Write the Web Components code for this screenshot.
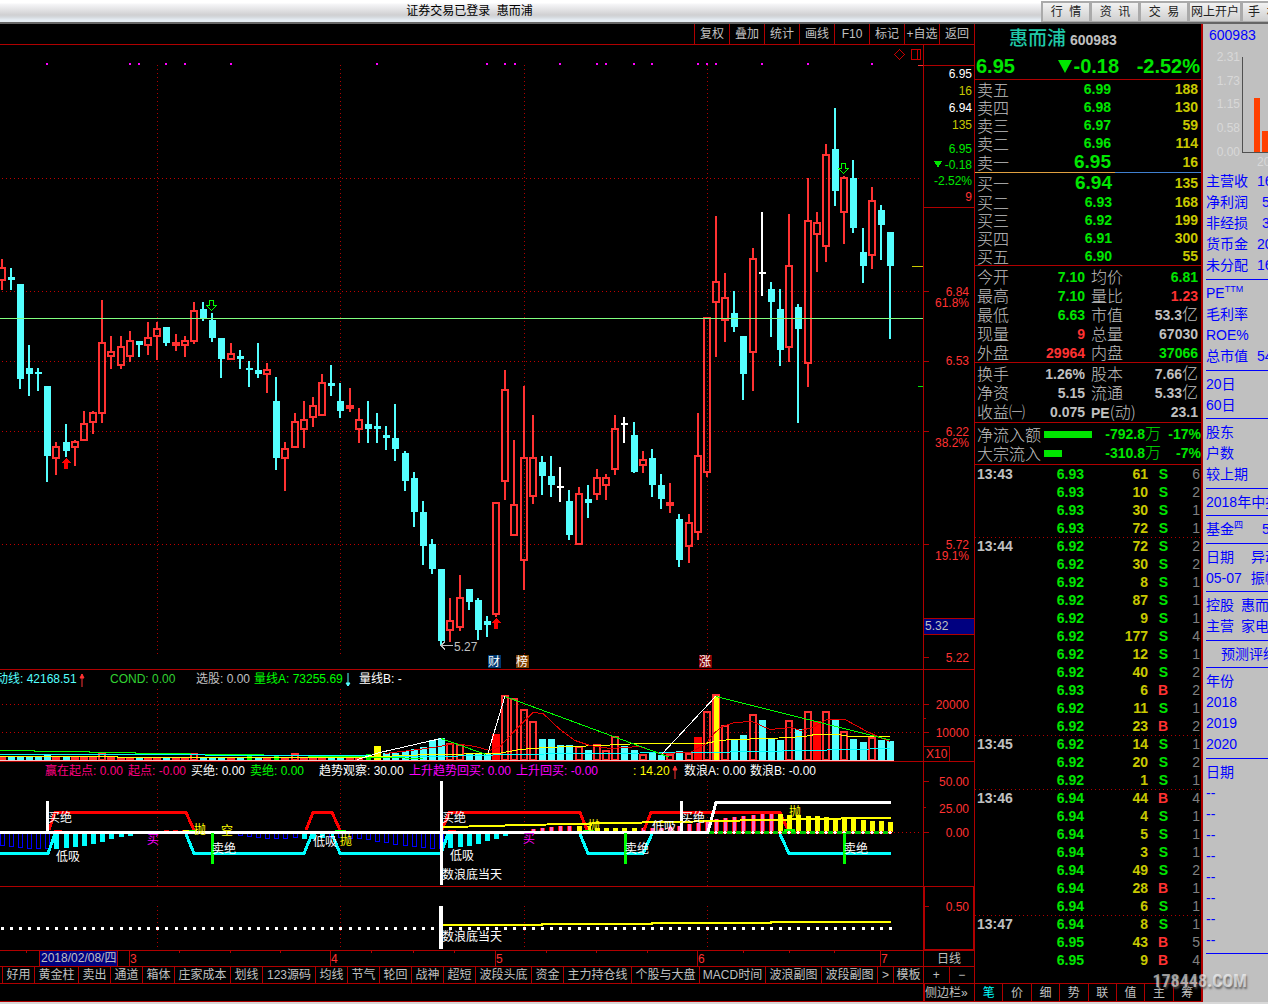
<!DOCTYPE html>
<html lang="zh-CN">
<head>
<meta charset="utf-8">
<title>惠而浦 600983</title>
<style>
html{background:#d8d8d8}
body{margin:0;font:12px/16px "Liberation Sans","Noto Sans CJK SC",sans-serif;color:#c0c0c0;overflow:hidden;
--line:#b00000;--up:#ff3232;--down:#00e600;--vol:#c8c800}
</style>
</head>
<body>
<trade-app></trade-app>
<script>
const BASE = `*{box-sizing:border-box}
button{font:inherit;color:inherit;background:none;border:0;margin:0;padding:0;white-space:pre;cursor:pointer}
svg{display:block}table{border-collapse:collapse;border-spacing:0}td,th{padding:0;font-weight:inherit;text-align:left}`;
class Base extends HTMLElement {
  connectedCallback() {
    if (this.shadowRoot) return;
    this.attachShadow({mode: 'open'}).innerHTML = `<style>${BASE}${this.css()}</style>${this.html()}`;
  }
  css() { return ''; }
  html() { return '<slot></slot>'; }
}

/* ---------- SVG helpers ---------- */
const CX = k => Math.round(1.5 + 9.16 * k);
const rect = (x, y, w, h, f) => `<rect x="${x}" y="${y}" width="${w}" height="${h}" fill="${f}"/>`;
const hollow = (x, y, w, h, c, s = 2) => `<rect x="${x + s / 2}" y="${y + s / 2}" width="${w - s}" height="${Math.max(h - s, 0)}" fill="none" stroke="${c}" stroke-width="${s}"/>`;
const poly = (pts, c, s = 1) => `<polyline points="${pts}" fill="none" stroke="${c}" stroke-width="${s}"/>`;
/* y is the middle of the glyphs; Chinese glyphs reach lower than digits */
const text = (x, y, t, c, a = 'start') => `<text x="${x}" y="${y + (/^[\u4e00-\u9fff]/.test(t) ? 5 : 4)}" fill="${c}" text-anchor="${a}">${t}</text>`;
const hdots = y => `<path d="M2 ${y}.5H920" stroke="#c00000" stroke-dasharray="1 3"/>`;
const vdots = (a, b) => [157, 340, 524, 707].map(x => `<path d="M${x}.5 ${a}V${b}" stroke="#b00000" stroke-dasharray="1 3"/>`).join('');
const svg = (x, y, w, h, body) => `<svg viewBox="${x} ${y} ${w} ${h}" height="${h}" preserveAspectRatio="xMinYMin meet" shape-rendering="crispEdges">${body}</svg>`;
const ROW_CSS = `:host{display:flex;background:#000;border-bottom:1px solid var(--line)}
.plot{flex:1 1 0;min-width:0;overflow:hidden}.plot svg{width:100%}.axis{flex:0 0 52px;border:solid var(--line);border-width:0 1px}.axis svg{width:50px}
text{font:12px "Liberation Sans","Noto Sans CJK SC",sans-serif}
.legend{display:grid;height:17px;padding-top:2px;line-height:15px;white-space:nowrap;overflow:hidden}.legend span{display:flex;align-items:center}.plot .legend svg{width:8px;flex:none;margin-left:1px}`;
const UP = '<svg width="8" height="14" viewBox="0 0 8 14"><path d="M4 14V1M2 5L4 1L6 5Z" stroke="#ff3232" fill="#ff3232"/></svg>';
const DN = '<svg width="8" height="14" viewBox="0 0 8 14"><path d="M4 0V13M2 10L4 13L6 10Z" stroke="#54ffff" fill="#54ffff"/></svg>';

/* type, high, low, body top, body bottom */
const K = `r259 290 267 281,c268 290 277 280,c284 389 284 379,c345 396 368 374,c368 391 372 374,c386 482 386 456,r442 475 446 459,c424 457 442 451,r440 466 441 448,r411 441 423 441,r411 434 412 423,r300 423 342 414,r336 369 351 357,r336 369 346 366,r331 362 340 357,c341 357 341 345,r322 355 337 346,r322 360 328 337,c327 346 327 343,r334 351 342 346,r336 357 340 346,r302 344 310 342,c302 321 309 318,c313 342 320 338,c338 378 338 359,r343 360 353 360,c350 369 356 359,c361 387 368 370,c343 378 370 374,r363 393 369 375,c377 470 401 458,r442 491 448 459,r413 448 421 448,r401 448 419 430,r397 427 405 418,r374 416 382 416,c365 396 383 386,c383 418 401 411,r388 412 405 409,r408 443 419 430,c401 443 424 429,c413 443 426 429,c426 450 435 438,c404 461 438 449,c451 491 453 481,c472 527 478 512,c501 565 512 546,c539 574 544 569,c569 646 569 641,r598 642 620 631,r575 631 597 628,c589 610 589 602,c598 640 600 630,c616 637 621 625,r502 617 502 615,r370 500 389 482,r440 536 504 536,r386 590 457 561,r415 504 457 497,c456 495 462 476,c456 497 476 485,w467 502 486 488,c490 540 501 535,r487 545 493 545,c485 518 499 503,r469 500 477 495,r474 500 477 486,r415 475 428 470,w417 443 423 425,c422 473 435 472,r451 473 459 466,c449 497 458 485,c474 509 485 499,r483 513 502 506,c514 567 519 560,r514 563 522 547,r413 540 455 533,r317 477 317 473,r216 357 281 303,r273 342 297 321,c291 332 313 327,c336 400 336 374,r248 391 258 353,w212 296 272 274,c282 337 289 302,c289 366 309 350,r214 362 265 348,c304 423 307 329,r178 387 220 364,r212 272 222 235,r144 262 154 247,c108 206 149 191,r176 244 177 213,c160 233 178 228,c228 283 252 266,r187 269 200 256,c205 260 210 225,c232 339 232 266`
  .split(',').map(s => [s[0], ...s.slice(1).split(' ').map(Number)]);

customElements.define('price-chart', class extends Base {
  css() { return ROW_CSS; }
  html() {
    let b = [178, 291, 361, 431, 544].map(hdots).join('') + vdots(65, 655);
    for (const x of [46, 129, 138, 165, 184, 230, 376, 486, 504, 514, 559, 596, 605, 633, 651, 697, 706, 715, 761, 807, 871]) b += rect(x, 63, 2, 2, '#ff00ff');
    K.forEach(([t, hi, lo, top, bot], k) => {
      const x = CX(k);
      if (t === 'r') b += rect(x - 1, hi, 2, top - hi, '#ff3232') + rect(x - 1, bot, 2, lo - bot, '#ff3232') + hollow(x - 4, top, 8, bot - top, '#ff3232');
      else b += rect(x - 1, hi, 2, lo - hi, t === 'c' ? '#54ffff' : '#fff') + rect(x - 3, top, 7, bot - top, t === 'c' ? '#54ffff' : '#fff');
    });
    b += rect(0, 318, 923, 1, '#80ff80') + rect(912, 266, 11, 1, '#c8c800') + rect(918, 386, 5, 1, '#00e600') + rect(918, 65, 5, 1, '#ff3232');
    const down = (x, y) => `<path d="M${x - 1.5} ${y + .5}h4v5h3l-5 5l-5 -5h3z" fill="none" stroke="#00ff00"/>`;
    const up = (x, y) => `<path d="M${x} ${y}l5 5h-3v6h-4v-6h-3z" fill="#ff0000"/>`;
    b += down(211, 300) + down(843, 163) + up(66, 458) + up(496, 618);
    b += '<path d="M899.500 49.500l5 5l-5 5l-5 -5zM911.500 49.500h9v10h-9zM917.500 49v11" fill="none" stroke="#c80000"/>';
    b += '<path d="M441 645.500h12M445 641.500l-4 4l4 4" fill="none" stroke="#c0c0c0"/>' + text(454, 647, '5.27', '#c0c0c0');
    for (const [x, t, c] of [[488, '财', '#003870'], [516, '榜', '#804000'], [699, '涨', '#800000']]) b += rect(x, 655, 13, 13, c) + text(x, 661, t, '#fff');
    let a = [65, 207].map(y => rect(924, y, 50, 1, '#b00000')).join('') + [291, 361, 431, 544, 657].map(y => rect(924, y, 5, 1, '#b00000')).join('');
    for (const [y, t, c] of [[74, '6.95', '#fff'], [91, '16', '#c8c800'], [108, '6.94', '#fff'], [125, '135', '#c8c800'], [149, '6.95', '#00e600'], [165, '-0.18', '#00e600'], [181, '-2.52%', '#00e600'], [197, '9', '#ff3232']]) a += text(972, y, t, c, 'end');
    a += '<path d="M934 161h8l-4 7z" fill="#00e600"/>';
    for (const [y, t] of [[292, '6.84'], [303, '61.8%'], [361, '6.53'], [432, '6.22'], [443, '38.2%'], [545, '5.72'], [556, '19.1%'], [658, '5.22']]) a += text(969, y, t, '#ff3232', 'end');
    a += rect(924, 618, 50, 17, '#b00000') + rect(924, 619, 50, 15, '#000080') + text(925, 626, '5.32', '#c0c0c0');
    return `<div class="plot">${svg(0, 45, 923, 624, b)}</div><div class="axis">${svg(924, 45, 50, 624, a)}</div>`;
  }
});

customElements.define('volume-chart', class extends Base {
  css() { return ROW_CSS + `.legend{grid-template-columns:110px 86px 58px 105px auto}.first{margin-left:-4px}`; }
  html() {
    let b = hdots(704) + hdots(732) + vdots(689, 758);
    const small = {5: 755, 11: 753, 21: 753, 27: 756, 30: 756, 32: 753, 40: 754, 41: 746, 42: 753, 43: 753, 44: 751, 45: 749, 46: 747, 47: 740, 48: 738, 49: 743, 50: 744, 51: 754, 52: 754, 53: 754};
    const tops = [734, 695, 698, 709, 721, 739, 739, 745, 745, 746, 750, 744, 750, 736, 746, 750, 754, 752, 755, 754, 751, 753, 737, 711, 694, 725, 739, 735, 714, 720, 738, 740, 720, 729, 711, 721, 711, 720, 731, 739, 742, 737, 740, 741];
    K.forEach(([t], k) => {
      const x = CX(k), y = k < 54 ? small[k] || 757 : tops[k - 54], h = 760 - y;
      if ([54, 76, 89].includes(k)) b += rect(x - 4, y, 8, h, '#ff0000');
      else if (k === 78) b += hollow(x - 4, y, 8, h, '#ff3232') + rect(x - 2, y + 2, 5, h - 2, '#ffff00');
      else if (k === 41) b += rect(x - 3, y, 7, h, '#ffff00');
      else if ([27, 30, 40].includes(k)) b += rect(x - 2, y, 5, h, '#00ff00');
      else if (t === 'r') b += hollow(x - 4, y, 8, h + 1, '#ff3232');
      else b += rect(x - 3, y, 7, h, '#54ffff');
    });
    b += rect(0, 760, 894, 1, '#ffc8c8');
    b += poly('0,750.5 34,750.5 34,751.5 89,751.5 89,752.5 135,752.5 135,753.5 190,753.5 190,754.5 263,754.5 263,755.5 350,756.5 423,758.5', '#00ff00');
    b += poly('0,754.500 110,754.500 300,755.500 441,756.500 510,754.500 580,753.500 700,752.500 760,751.500 850,749.500 890,748.500', '#00ffff');
    b += poly('0,756.500 117,756.500 117,757.500 355,757.500 430,754.500 498,753.500 520,749.500 545,747.500 600,745.500 640,743.500 705,743.500 715,741.500 730,739.500 770,738.500 805,736.500 815,734.500 838,734.500 850,736.500 890,736.500', '#ffff00');
    b += poly('385,753.500 418,749.500 440,746.500 455,743.500 475,746.500 490,750.500 500,746.500 515,730.500 533,712.500 543,713.500 560,729.500 575,740.500 590,745.500 610,748.500 640,746.500 660,753.500 690,752.500 705,744.500 715,732.500 722,726.500 735,722.500 752,721.500 770,729.500 792,727.500 800,730.500 813,727.500 827,719.500 845,719.500 867,731.500 880,737.500 890,741.500', '#e00000');
    b += poly('357,759.500 380,752.500 441,738.500', '#fff') + poly('441,738.500 486,754.500', '#00ff00') + poly('488,753 505,696', '#fff') + poly('505,696.500 669,757', '#00ff00') + poly('662,754 716,696', '#fff') + poly('716,696.500 890,740', '#00ff00');
    let a = rect(924, 704, 5, 1, '#b00000') + rect(924, 718, 2, 1, '#b00000') + rect(924, 732, 5, 1, '#b00000');
    a += text(969, 705, '20000', '#ff3232', 'end') + text(969, 733, '10000', '#ff3232', 'end') + '<path d="M924 746.500h25.500v15" fill="none" stroke="#b00000"/>' + text(926, 754, 'X10', '#ff3232');
    return `<div class="plot"><div class="legend"><span class="first" style="color:#54ffff">动线: 42168.51${UP}</span><span style="color:#32d232">COND: 0.00</span><span>选股: 0.00</span><span style="color:#00ff00">量线A: 73255.69${DN}</span><span style="color:#fff">量线B: -</span></div>${svg(0, 687, 923, 74, b)}</div><div class="axis">${svg(924, 670, 50, 91, a)}</div>`;
  }
});

customElements.define('signal-chart', class extends Base {
  css() { return ROW_CSS + `.legend{padding-left:45px;grid-template-columns:83px 63px 59px 69px 90px 107px 117px 51px 66px auto}`; }
  html() {
    let b = vdots(781, 886) + hdots(832);
    const col = (k, y, f, w = 5) => rect(CX(k) - 2, y, w, 832 - y, f);
    const blue = {0: 846, 1: 847, 2: 848, 3: 849, 4: 849, 5: 849, 26: 836, 27: 837, 28: 838, 29: 839, 30: 839, 31: 839, 32: 838, 36: 838, 37: 838, 38: 839, 39: 839, 40: 840, 41: 842, 42: 843, 43: 845, 44: 846, 45: 847, 46: 848, 47: 849, 48: 849};
    for (const k in blue) b += hollow(CX(+k) - 2, 833, 5, blue[k] - 833, '#0000ff', 1);
    const cy = {6: 849, 7: 848, 8: 847, 9: 846, 10: 844, 11: 842, 12: 839, 13: 837, 14: 836, 33: 839, 34: 839, 35: 838, 49: 848, 50: 847, 51: 846, 52: 844, 53: 841, 54: 839, 55: 836};
    for (const k in cy) b += rect(CX(+k) - 2, 833, 5, cy[k] - 833, '#00ffff');
    [829, 828, 827, 826, 826].forEach((y, i) => b += col(58 + i, y, '#ff0000') + rect(CX(58 + i) - 1, y, 3, 832 - y, '#ff64c8'));
    [826, 826, 828, 828, 828, 828, 828].forEach((y, i) => b += col(63 + i, y, '#ffff00'));
    [828, 828, 828, 827, 826, 824, 823, 822, 819, 818, 817, 816, 815, 814, 814].forEach((y, i) => b += col(70 + i, y, '#ff0000') + rect(CX(70 + i) - 1, y, 3, 832 - y, '#ff64c8'));
    b += poly('0,853.500 48,853.500 55,834', '#00ffff', 3) + poly('186,834 194,853.500 304,853.500 312,834', '#00ffff', 3) + poly('332,834 340,853.500 441,853.500 448,834', '#00ffff', 3) + poly('580,834 588,853.500 643,853.500 652,834', '#00ffff', 3) + poly('780,834 789,853.500 891,853.500', '#00ffff', 3);
    b += poly('49,830 55,812.500 186,812.500 194,830', '#ff0000', 3) + poly('306,830 313,812.500 332,812.500 340,830', '#ff0000', 3) + poly('442,830 449,812.500 580,812.500 587,830', '#ff0000', 3) + poly('644,830 651,812.500 780,812.500 788,830', '#ff0000', 3);
    [814, 815, 815, 816, 816, 817, 818, 819, 819, 820, 821, 821, 822].forEach((y, i) => b += rect(CX(85 + i) - 2, y, 5, 832 - y, '#ffff00'));
    b += '<path d="M164 830.500h24" stroke="#ff0000" stroke-dasharray="5 4"/>' + rect(183, 830, 6, 1, '#ffff00') + rect(189, 830, 8, 1, '#00ff00') + rect(335, 830, 11, 1, '#00ff00') + rect(583, 830, 11, 1, '#00ff00') + rect(54, 830, 8, 1, '#ff0000') + rect(448, 830, 8, 1, '#ff0000');
    b += rect(708, 831, 183, 3, '#00c800') + rect(784, 829, 11, 3, '#00ff00');
    for (let k = 78; k < 98; k++) b += rect(CX(k) - 2, 831, 4, 3, '#ff0000') + rect(CX(k) - 1, 831, 2, 3, '#fff') + rect(CX(k) - 2, 832, 4, 1, '#fff');
    b += rect(0, 831, 709, 3, '#fff') + rect(46, 801, 3, 32, '#fff') + rect(680, 801, 3, 32, '#fff') + rect(440, 781, 3, 104, '#fff') + poly('708,832 716,802.500 891,802.500', '#fff', 3);
    b += poly('443,827 469,826.500 524,825 570,824 615,823 670,822 718,821 763,820 820,819 863,818 891,818', '#ffff00', 2);
    for (const x of [211, 624, 843]) b += rect(x, 833, 3, 31, '#00ff00');
    for (const [x, y, t, c] of [[48, 817, '买绝', '#fff'], [56, 856, '低吸', '#fff'], [147, 839, '买', '#ff00ff'], [194, 829, '抛', '#ffff00'], [221, 830, '空', '#ffff00'], [212, 848, '卖绝', '#fff'], [313, 841, '低吸', '#fff'], [340, 840, '抛', '#ffff00'], [442, 817, '买绝', '#fff'], [450, 855, '低吸', '#fff'], [442, 874, '数浪底当天', '#fff'], [523, 838, '买', '#ff00ff'], [588, 825, '抛', '#ffff00'], [652, 826, '低吸', '#fff'], [681, 817, '买绝', '#fff'], [625, 848, '卖绝', '#fff'], [789, 811, '抛', '#ffff00'], [844, 848, '卖绝', '#fff']]) b += text(x, y, t, c);
    let a = '';
    for (const [y, w] of [[781, 5], [807, 2], [832, 5]]) a += rect(924, y, w, 1, '#b00000');
    a += text(969, 782, '50.00', '#ff3232', 'end') + text(969, 809, '25.00', '#ff3232', 'end') + text(969, 833, '0.00', '#ff3232', 'end');
    const L = [['#ff0080', '赢在起点: 0.00'], ['#ff0080', '起点: -0.00'], ['#fff', '买绝: 0.00'], ['#00ff00', '卖绝: 0.00'], ['#fff', '趋势观察: 30.00'], ['#ff00ff', '上升趋势回买: 0.00'], ['#ff00ff', '上升回买: -0.00'], ['#ffff00', ': 14.20' + UP], ['#fff', '数浪A: 0.00'], ['#fff', '数浪B: -0.00']];
    return `<div class="plot"><div class="legend">${L.map(([c, t]) => `<span style="color:${c}">${t}</span>`).join('')}</div>${svg(0, 779, 923, 107, b)}</div><div class="axis">${svg(924, 762, 50, 124, a)}</div>`;
  }
});

customElements.define('wave-chart', class extends Base {
  css() { return ROW_CSS + `.axis{border-width:0 2px 1px}.axis svg{width:48px}`; }
  html() {
    let b = vdots(906, 948);
    for (let k = 0; k < 98; k++) b += rect(CX(k) - 1, 927, 3, 3, '#fff');
    b += rect(439, 906, 4, 43, '#fff') + poly('443,925 542,925 542,924 652,924 652,923 771,923 771,922 891,922', '#ffff00', 2) + text(442, 936, '数浪底当天', '#fff');
    return `<div class="plot">${svg(0, 887, 923, 63, b)}</div><div class="axis">${svg(925, 887, 48, 62, rect(925, 906, 4, 1, '#b00000') + text(969, 907, '0.50', '#ff3232', 'end'))}</div>`;
  }
});

customElements.define('date-axis', class extends Base {
  css() { return ROW_CSS + `button{flex:0 0 52px;height:15px;line-height:16px;border:solid var(--line);border-width:0 1px}`; }
  html() {
    let b = rect(39, 951, 79, 15, '#b00000') + rect(40, 951, 77, 15, '#000080') + text(41, 958, '2018/02/08/四', '#c0c0c0');
    for (const [x, t] of [[129, '3'], [330, '4'], [495, '5'], [697, '6'], [880, '7']]) b += rect(x, 951, 1, 15, '#b00000') + text(x + 1, 959, t, '#ff3232');
    for (const x of [26, 179, 230, 280, 371, 413, 454, 546, 596, 647, 743, 789, 834]) b += rect(x, 951, 1, 2, '#b00000');
    return `<div class="plot">${svg(0, 951, 923, 15, b)}</div><button>日线</button>`;
  }
});

customElements.define('chart-toolbar', class extends Base {
  css() { return `:host{display:flex;justify-content:flex-end;height:21px;background:#000;border-bottom:1px solid var(--line);border-right:1px solid var(--line)}button{width:35px;border-left:1px solid var(--line);line-height:21px;text-align:center}`; }
  html() { return ['复权', '叠加', '统计', '画线', 'F10', '标记', '+自选', '返回'].map(t => `<button>${t}</button>`).join(''); }
});

customElements.define('formula-tabs', class extends Base {
  css() { return `:host{display:flex;height:17px;background:#000;border-bottom:1px solid var(--line);overflow:hidden}
nav{flex:1;display:flex;min-width:0;overflow:hidden;padding-left:2px}button{flex:none;border-left:1px solid var(--line);line-height:17px;text-align:center}
.z{flex:0 0 52px;display:flex;border-right:1px solid var(--line)}.z button{flex:1}`; }
  html() {
    const T = [['好用', 32], ['黄金柱', 44], ['卖出', 32], ['通道', 32], ['箱体', 32], ['庄家成本', 56], ['划线', 32], ['123源码', 53], ['均线', 32], ['节气', 32], ['轮回', 32], ['战神', 32], ['超短', 32], ['波段头底', 56], ['资金', 32], ['主力持仓线', 68], ['个股与大盘', 68], ['MACD时间', 66], ['波浪副图', 56], ['波段副图', 56], ['&gt;', 16], ['模板', 30]];
    return `<nav>${T.map(([t, w]) => `<button style="width:${w}px">${t}</button>`).join('')}</nav><div class="z"><button>+</button><button>−</button></div>`;
  }
});

customElements.define('side-toggle', class extends Base {
  css() { return `:host{display:flex;justify-content:flex-end;height:18px;background:#000;border-bottom:1px solid var(--line)}button{width:52px;border:solid var(--line);border-width:0 1px 0 2px;line-height:19px;text-align:left;overflow:hidden}`; }
  html() { return '<button>侧边栏»</button>'; }
});

customElements.define('title-bar', class extends Base {
  css() { return `:host{display:flex;height:24px;color:#000;background:linear-gradient(#fff 0 3px,#f6f6f8 4px,#d0d0d2 15px,#d4d8dc 17px,#e6edf4 20px,#e6edf4 22px);border-bottom:2px solid #666;overflow:hidden}
h1{flex:1;margin:0;font:inherit;line-height:23px;text-align:center;padding-right:102px;white-space:pre}
nav{display:flex;flex:0 0 227px;overflow:hidden}button{flex:none;margin-top:1px;height:21px;width:49px;border:solid #aaa;border-width:2px 1px 1px 2px;background:linear-gradient(#f2f2f2,#cfcfcf);color:#222;line-height:18px;text-align:center}
button:nth-child(4){width:53px}button:last-child{text-align:left;padding-left:5px}`; }
  html() { return '<h1>证券交易已登录  惠而浦</h1><nav><button>行  情</button><button>资  讯</button><button>交  易</button><button>网上开户</button><button>手  机</button></nav>'; }
});

customElements.define('quote-panel', class extends Base {
  css() { return `:host{display:flex;flex-direction:column;background:#000;border-right:2px solid var(--line);white-space:nowrap;font-weight:bold;font-size:14px;line-height:18px}
header{display:flex;align-items:baseline;padding-left:34px;gap:4px;height:28px;line-height:28px}h2{margin:0;font:500 19px/26px "Noto Sans CJK SC",sans-serif;color:#20c8a8}
.big{display:flex;justify-content:space-between;padding:0 1px;height:28px;line-height:28px;font-size:20px;color:var(--down);border-bottom:1px solid var(--line)}
.big span:nth-child(2){padding-left:26px}.big svg{display:inline-block;margin-right:1px}
table{width:100%;table-layout:fixed}th{font:300 16px "Noto Sans CJK SC",sans-serif;line-height:18px;padding-left:2px}
td{text-align:right}tr{height:18px}.book th{width:60px;line-height:16px}.book td:nth-child(2){color:var(--down);width:76px}.book td:nth-child(3){color:var(--vol);padding-right:3px}
.book tr.one{height:20px}.one td:nth-child(2){font-size:19px;width:77px}
.sell{border-bottom:1px solid;border-image:linear-gradient(90deg,#e0a040 62%,#4080d0 62%) 1}.buy,.stats,.flow{border-bottom:1px solid var(--line)}
.stats tr{height:19px}.stats th{line-height:17px}.stats{padding-top:1px}.stats.b{padding-bottom:1px}
.stats th:nth-child(1){width:60px}.stats td:nth-child(2){width:50px}.stats th:nth-child(3){width:49px;padding-left:6px}.stats td:nth-child(4){padding-right:3px}
.stats th span{font:bold 14px "Liberation Sans",sans-serif}
i{font:300 16px "Noto Sans CJK SC",sans-serif;line-height:1}
.g{color:var(--down)}.r{color:var(--up)}
.flow{padding:1px 0 2px}.flow div{display:grid;grid-template-columns:67px 48px 1fr 40px;height:19px;line-height:19px;padding-left:2px;align-items:center;color:var(--down);text-align:right}
.flow label{font:300 16px/17px "Noto Sans CJK SC",sans-serif;color:#c0c0c0;text-align:left}.flow b{height:7px;background:var(--down)}
.ticks{margin-bottom:14px}.ticks td:nth-child(1){width:50px;text-align:left;padding-left:2px}.ticks td:nth-child(2){width:59px;color:var(--down)}.ticks td:nth-child(3){width:64px;color:var(--vol)}.ticks td:nth-child(4){width:20px}.ticks td:nth-child(5){font-weight:normal;color:#808080;padding-right:1px}
.ticks tr.m{background:repeating-linear-gradient(90deg,var(--line) 0 1px,transparent 1px 4px) 0 0/100% 1px no-repeat}
nav{display:flex;border:solid var(--line);border-width:1px 0;height:19px;font-size:12px;font-weight:normal}nav button{flex:1;line-height:19px;border-left:1px solid var(--line);text-align:center}nav button:first-child{color:#00ffff;border-left:0}`; }
  html() {
    const book = (c, rows) => `<div class="${c}"><table class="book">${rows.map(([a, p, v, o]) => `<tr${o ? ' class="one"' : ''}><th>${a}</th><td>${p}</td><td>${v}</td></tr>`).join('')}</table></div>`;
    const st = (c, rows) => `<div class="stats ${c}"><table>${rows.map(([a, b, ca, d, e, cb]) => `<tr><th>${a}</th><td class="${ca}">${b}</td><th>${d}</th><td class="${cb}">${e}</td></tr>`).join('')}</table></div>`;
    const ticks = '13:43 6.93 61 S 6,- 6.93 10 S 2,- 6.93 30 S 1,- 6.93 72 S 1,13:44 6.92 72 S 2,- 6.92 30 S 2,- 6.92 8 S 1,- 6.92 87 S 1,- 6.92 9 S 1,- 6.92 177 S 4,- 6.92 12 S 1,- 6.92 40 S 2,- 6.93 6 B 2,- 6.92 11 S 1,- 6.92 23 B 2,13:45 6.92 14 S 1,- 6.92 20 S 2,- 6.92 1 S 1,13:46 6.94 44 B 4,- 6.94 4 S 1,- 6.94 5 S 1,- 6.94 3 S 1,- 6.94 49 S 2,- 6.94 28 B 1,- 6.94 6 S 1,13:47 6.94 8 S 1,- 6.95 43 B 5,- 6.95 9 B 4'.split(',').map(r => r.split(' '));
    return `<header><h2>惠而浦</h2><span>600983</span></header>
<div class="big"><span>6.95</span><span><svg width="14" height="13" viewBox="0 0 14 13"><path d="M0 0h14L7 13z" fill="#00e600"/></svg>-0.18</span><span>-2.52%</span></div>
${book('sell', [['卖五', '6.99', 188], ['卖四', '6.98', 130], ['卖三', '6.97', 59], ['卖二', '6.96', 114], ['卖一', '6.95', 16, 1]])}
${book('buy', [['买一', '6.94', 135, 1], ['买二', '6.93', 168], ['买三', '6.92', 199], ['买四', '6.91', 300], ['买五', '6.90', 55]])}
${st('', [['今开', '7.10', 'g', '均价', '6.81', 'g'], ['最高', '7.10', 'g', '量比', '1.23', 'r'], ['最低', '6.63', 'g', '市值', '53.3<i>亿</i>', ''], ['现量', '9', 'r', '总量', '67030', ''], ['外盘', '29964', 'r', '内盘', '37066', 'g']])}
${st('b', [['换手', '1.26%', '', '股本', '7.66<i>亿</i>', ''], ['净资', '5.15', '', '流通', '5.33<i>亿</i>', ''], ['收益㈠', '0.075', '', '<span>PE</span>(动)', '23.1', '']])}
<div class="flow"><div><label>净流入额</label><b></b><span>-792.8<i>万</i></span><span>-17%</span></div><div><label>大宗流入</label><b style="width:18px"></b><span>-310.8<i>万</i></span><span>-7%</span></div></div>
<table class="ticks">${ticks.map(([t, p, v, s, n], i) => `<tr${t !== '-' && i ? ' class="m"' : ''}><td>${t === '-' ? '' : t}</td><td>${p}</td><td>${v}</td><td class="${s === 'S' ? 'g' : 'r'}">${s}</td><td>${n}</td></tr>`).join('')}</table>
<nav>${[...'笔价细势联值主筹'].map(t => `<button>${t}</button>`).join('')}</nav>`;
  }
});

customElements.define('info-panel', class extends Base {
  css() { return `:host{display:block;background:#c0c0c0;color:#0000ff;font-size:14px;line-height:21px;white-space:nowrap;overflow:hidden}
.code{padding-left:6px;height:24px;line-height:23px}.chart text{font:12px "Liberation Sans",sans-serif}
section{margin-left:3px;padding:3px 0;border-bottom:1px solid #0000ff}section:first-of-type{padding-top:0}section.t{padding-bottom:2px}
div.row{display:flex;height:21px}sup{font-size:9px;line-height:9px;align-self:flex-start;margin-top:2px}`; }
  html() {
    const row = (a, b = '', g = 9) => `<div class="row" style="gap:${g}px"><span style="display:flex">${a}</span><span>${b}</span></div>`;
    const G = [
      ['', row('主营收', '16') + row('净利润', '5', 14) + row('非经损', '3', 14) + row('货币金', '20') + row('未分配', '16')],
      ['', row('PE<sup>TTM</sup>') + row('毛利率') + row('ROE%') + row('总市值', '54')],
      ['t', row('20日') + row('60日')], ['', row('股东') + row('户数') + row('较上期')], ['t', row('2018年中报')],
      ['', row('基金<sup>四</sup>', '5', 19)], ['t', row('日期', '异动', 17) + row('05-07', '振幅')], ['', row('控股', '惠而浦', 7) + row('主营', '家电', 7)],
      ['t', '<div class="row" style="padding-left:15px">预测评级</div>'], ['', row('年份') + row('2018') + row('2019') + row('2020')], ['t', row('日期') + row('--').repeat(8)]];
    let c = '';
    ['2.31', '1.73', '1.15', '0.58', '0.00'].forEach((t, i) => c += text(1240, 57 + Math.round(i * 23.7), t, '#d8d8d8', 'end'));
    c += rect(1242, 57, 1, 96, '#505050') + rect(1242, 152, 26, 1, '#505050') + rect(1254, 98, 6, 54, '#ff4000') + rect(1262, 131, 6, 21, '#ff4000') + text(1257, 162, '20', '#d8d8d8');
    return `<div class="code">600983</div><div class="chart">${svg(1203, 48, 65, 123, c)}</div>${G.map(([k, h]) => `<section class="${k}">${h}</section>`).join('')}`;
  }
});

customElements.define('water-mark', class extends Base {
  css() { return `:host{position:absolute;right:21px;bottom:8px;font:bold 18px/26px "Liberation Sans Narrow","Roboto Condensed","Open Sans Condensed","Liberation Sans",sans-serif;color:rgba(255,255,255,.6);text-shadow:1px 2px 2px rgba(80,80,80,.8);pointer-events:none}`; }
});

customElements.define('trade-app', class extends Base {
  css() { return `:host{display:block;position:relative;border-bottom:2px solid #d8d8d8}.body{display:flex;align-items:stretch}.left{flex:1 1 0;min-width:0;display:flex;flex-direction:column}
quote-panel{flex:0 0 228px}info-panel{flex:0 0 65px}`; }
  html() {
    return `<title-bar></title-bar><div class="body"><main class="left"><chart-toolbar></chart-toolbar><price-chart></price-chart><volume-chart></volume-chart><signal-chart></signal-chart><wave-chart></wave-chart><date-axis></date-axis><formula-tabs></formula-tabs><side-toggle></side-toggle></main><quote-panel></quote-panel><info-panel></info-panel></div><water-mark>178448.COM</water-mark>`;
  }
});
</script>
</body>
</html>
